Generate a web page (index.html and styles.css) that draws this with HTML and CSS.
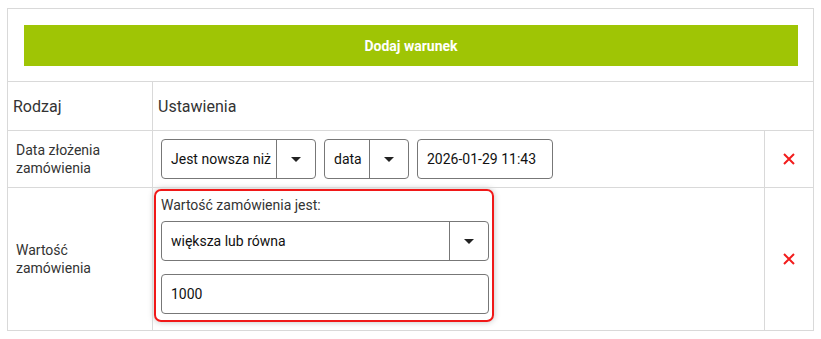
FILE: index.html
```html
<!DOCTYPE html>
<html>
  <head>
    <meta charset="utf-8">
    <link rel="stylesheet" href="styles.css">
  </head>
  <body>
    <table class="conditions">
      <tr>
        <td colspan="3" class="add-cell">
          <button class="add-btn">Dodaj warunek</button>
        </td>
      </tr>
      <tr class="head">
        <th class="col-type">Rodzaj</th>
        <th colspan="2">Ustawienia</th>
      </tr>
      <tr class="row-date">
        <td class="type">Data złożenia zamówienia</td>
        <td class="settings">
          <div class="fields">
            <div class="select sel-when">
              <span class="val">Jest nowsza niż</span>
              <span class="arrow"><i></i></span>
            </div>
            <div class="select sel-unit">
              <span class="val">data</span>
              <span class="arrow"><i></i></span>
            </div>
            <div class="input inp-date">2026-01-29 11:43</div>
          </div>
        </td>
        <td class="del">
          <svg width="12" height="12" viewBox="0 0 12 12">
            <path d="M1 1L11 11M11 1L1 11" stroke="#f21c1c" stroke-width="2" fill="none"></path>
          </svg>
        </td>
      </tr>
      <tr class="row-value">
        <td class="type">Wartość zamówienia</td>
        <td class="settings focus-cell">
          <div class="focus-box">
            <p class="label">Wartość zamówienia jest:</p>
            <div class="select sel-full">
              <span class="val">większa lub równa</span>
              <span class="arrow"><i></i></span>
            </div>
            <div class="input inp-full">1000</div>
          </div>
        </td>
        <td class="del">
          <svg width="12" height="12" viewBox="0 0 12 12">
            <path d="M1 1L11 11M11 1L1 11" stroke="#f21c1c" stroke-width="2" fill="none"></path>
          </svg>
        </td>
      </tr>
    </table>
  </body>
</html>
```

FILE: styles.css
```css
* {
  box-sizing: border-box;
}

body {
  margin: 8px 0 0 7px;
  font-family: Roboto, "Liberation Sans", sans-serif;
  color: #333;
  background: #fff;
}

.conditions {
  width: 807px;
  border-collapse: collapse;
  border: 1px solid #d9d9d9;
}

.conditions td,
.conditions th {
  border: 1px solid #d9d9d9;
  padding: 0;
}

.add-cell {
  padding: 16px 15px 15px 16px !important;
}

.add-btn {
  display: block;
  width: 100%;
  height: 41px;
  border: 0;
  background: #9fc505;
  color: #fff;
  font-family: Roboto, sans-serif;
  font-weight: 700;
  font-size: 14px;
}

.head th {
  height: 49px;
  text-align: left;
  font-weight: 400;
  font-size: 16px;
  padding: 0 5px !important;
}

.col-type {
  width: 145px;
}

.type {
  font-size: 14px;
  line-height: 18px;
  padding: 0 8px !important;
  vertical-align: middle;
}

.settings {
  padding: 8px !important;
}

.del {
  width: 49px;
  text-align: center;
  vertical-align: middle;
}

.del svg {
  display: block;
  margin: 0 auto;
}

.fields {
  display: flex;
  gap: 8px;
}

.select,
.input {
  display: flex;
  align-items: center;
  height: 40px;
  border: 1px solid #777;
  border-radius: 4px;
  font-size: 14px;
  color: #111;
  background: #fff;
}

.select .val {
  flex: 1;
  padding-left: 9px;
  white-space: nowrap;
}

.select .arrow {
  display: flex;
  align-items: center;
  justify-content: center;
  width: 39px;
  height: 100%;
  border-left: 1px solid #777;
}

.select .arrow i {
  width: 0;
  height: 0;
  border-left: 5px solid transparent;
  border-right: 5px solid transparent;
  border-top: 5px solid #222;
}

.input {
  padding-left: 9px;
}

.sel-when {
  width: 155px;
}

.sel-unit {
  width: 85px;
}

.inp-date {
  width: 136px;
}

.focus-cell {
  padding: 1px 8px 8px 1px !important;
}

.focus-box {
  width: 340px;
  border: 2px solid #f01818;
  border-radius: 7px;
  box-shadow: 0 0 6px rgba(0, 0, 0, 0.25);
  padding: 4px 3px 6px 5px;
}

.label {
  margin: 0 0 6px;
  font-size: 14px;
  line-height: 20px;
  color: #333;
}

.sel-full,
.inp-full {
  width: 328px;
}

.inp-full {
  margin-top: 13px;
}
```
